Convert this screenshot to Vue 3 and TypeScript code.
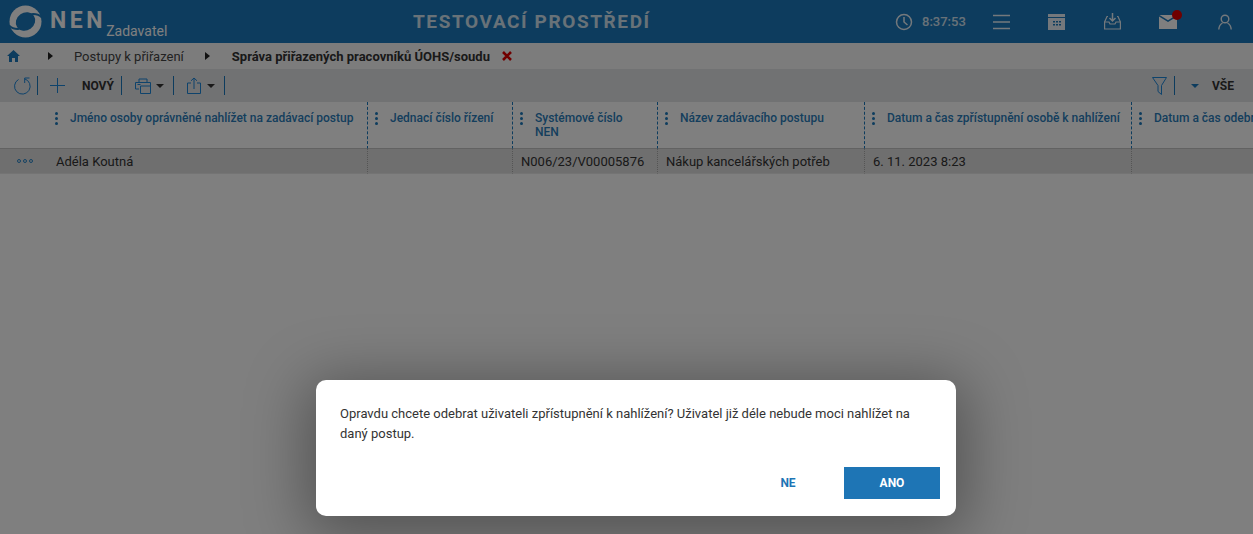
<script setup lang="ts">
interface Col { title: string; value: string; wrap?: boolean }
const cols: Col[] = [
  { title: 'Jméno osoby oprávněné nahlížet na zadávací postup', value: 'Adéla Koutná' },
  { title: 'Jednací číslo řízení', value: '' },
  { title: 'Systémové číslo NEN', value: 'N006/23/V00005876', wrap: true },
  { title: 'Název zadávacího postupu', value: 'Nákup kancelářských potřeb' },
  { title: 'Datum a čas zpřístupnění osobě k nahlížení', value: '6. 11. 2023 8:23' },
  { title: 'Datum a čas odebrání', value: '' }
]
</script>

<template>
  <div class="page">
    <header class="top">
      <div class="logo">
        <svg width="33" height="33" viewBox="0 0 34 34" class="mark">
          <circle cx="17" cy="17" r="16.500" fill="#fff" />
          <ellipse cx="17" cy="17" rx="10.500" ry="9" transform="rotate(-35 17 17)" fill="#1a78bc" />
          <path d="M23 9.500C27 9 31 10 34 13" fill="none" stroke="#1a78bc" stroke-width="2" />
          <path d="M11 24.500C7 25 3 24 0 21" fill="none" stroke="#1a78bc" stroke-width="2" />
        </svg>
        <span class="nen">NEN</span>
        <span class="role">Zadavatel</span>
      </div>
      <div class="env">TESTOVACÍ PROSTŘEDÍ</div>
      <div class="tools">
        <svg class="ic clock" width="18" height="18" viewBox="0 0 18 18" fill="none" stroke="#fff" stroke-width="1.500">
          <circle cx="9" cy="9" r="7.500" /><path d="M9 4v5l3.500 3" />
        </svg>
        <span class="time">8:37:53</span>
        <svg class="ic menu" width="17" height="16" viewBox="0 0 17 16" stroke="#fff" stroke-width="1.500">
          <path d="M0 1.500h17M0 8h17M0 14.500h17" />
        </svg>
        <svg class="ic cal" width="17" height="16" viewBox="0 0 17 16">
          <path d="M0 0h17v3H0zM0 4h17v12H0z" fill="#fff" />
          <path d="M5 7h2v1.500H5zM8 7h2v1.500H8zM11 7h2v1.500h-2zM5 10h2v1.500H5zM8 10h2v1.500H8zM11 10h2v1.500h-2z" fill="#1a78bc" />
        </svg>
        <svg class="ic inbox" width="17" height="17" viewBox="0 0 17 17" fill="none" stroke="#fff" stroke-width="1.200">
          <path d="M4 3.500H3L.6 9v7h15.800V9L14 3.500h-1" /><path d="M.6 9h4.400l1 2h5l1-2h4.400" />
          <path d="M8.500 0v8M5.500 5l3 3 3-3" stroke-width="1.500" />
        </svg>
        <span class="mail">
          <svg width="18" height="14" viewBox="0 0 18 14">
            <path d="M0 1.500 9 7l9-5.500V14H0z" fill="#fff" /><path d="M.5 0h17L9 5.200z" fill="#fff" />
          </svg>
          <i class="dot"></i>
        </span>
        <svg class="ic user" width="14" height="16" viewBox="0 0 14 16" fill="none" stroke="#fff" stroke-width="1.400">
          <circle cx="7" cy="5" r="3.800" /><path d="M.8 15.500c.2-3.500 2-5.600 3.700-6.500M13.200 15.500c-.2-3.500-2-5.600-3.700-6.500" />
        </svg>
      </div>
    </header>

    <nav class="crumbs">
      <svg class="home" width="13" height="12" viewBox="0 0 13 12"><path d="M6.500 0 13 6h-2v6H8V8H5v4H2V6H0z" fill="#1a78bc" /></svg>
      <span class="tri first"></span>
      <span class="crumb">Postupy k přiřazení</span>
      <span class="tri second"></span>
      <b class="crumb-b">Správa přiřazených pracovníků ÚOHS/soudu</b>
      <svg class="close" width="10" height="10" viewBox="0 0 10 10" stroke="#e00000" stroke-width="2.600"><path d="M1 1l8 8M9 1l-8 8" /></svg>
    </nav>

    <div class="toolbar">
      <svg class="refresh" width="17" height="18" viewBox="0 0 17 18" fill="none" stroke="#1c86d8" stroke-width="1">
        <path d="M10.500 1.800A7.800 7.800 0 1 1 4.500 2.500" /><path d="M15.500 1H10.700v5" />
      </svg>
      <span class="sep s1"></span>
      <svg class="plus" width="15" height="15" viewBox="0 0 15 15" stroke="#1c86d8" stroke-width="1"><path d="M7.500 0v15M0 7.500h15" /></svg>
      <b class="new">NOVÝ</b>
      <span class="sep s2"></span>
      <svg class="print" width="16" height="16" viewBox="0 0 16 16" fill="none" stroke="#1c86d8" stroke-width="1">
        <path d="M4 4V1h8v3M4 11H.5V4.500h15V8M5.500 8h10v7.500h-10zM2.500 6.500h3" />
      </svg>
      <span class="caret c1"></span>
      <span class="sep s3"></span>
      <svg class="share" width="14" height="17" viewBox="0 0 14 17" fill="none" stroke="#1c86d8" stroke-width="1">
        <path d="M4 6H.5v10.500h13V6H10M7 12V1M4 3.800 7 1l3 2.800" />
      </svg>
      <span class="caret c2"></span>
      <span class="sep s4"></span>
      <span class="grow"></span>
      <svg class="funnel" width="15" height="18" viewBox="0 0 15 18" fill="none" stroke="#1c86d8" stroke-width="1"><path d="M.5.500h14L9.500 8.500v9L6 14.500v-6z" /></svg>
      <span class="sep s5"></span>
      <span class="caret blue"></span>
      <b class="all">VŠE</b>
    </div>

    <div class="grid">
      <div v-for="(c, i) in cols" :key="c.title" class="th" :class="{ firstcol: i === 0, nowrap: !c.wrap }">
        <span class="dots"><i></i><i></i><i></i></span>
        <span class="tt">{{ c.title }}</span>
      </div>
      <div v-for="(c, i) in cols" :key="c.title + 'v'" class="td" :class="{ firstcol: i === 0 }">
        <span v-if="i === 0" class="rowmenu"><i></i><i></i><i></i></span>
        <span>{{ c.value }}</span>
      </div>
    </div>

    <div class="overlay"></div>
    <div class="dialog">
      <p>Opravdu chcete odebrat uživateli zpřístupnění k nahlížení? Uživatel již déle nebude moci nahlížet na daný postup.</p>
      <div class="actions">
        <button class="no">NE</button>
        <button class="yes">ANO</button>
      </div>
    </div>
  </div>
</template>

<style scoped>
.page { position: relative; width: 1253px; height: 534px; overflow: hidden; background: #fff; font-family: Roboto, "Liberation Sans", sans-serif; color: #333; }
.top { height: 43px; background: #1a78bc; display: flex; align-items: center; color: #fff; }
.logo { width: 413px; display: flex; align-items: center; padding-left: 9px; box-sizing: border-box; height: 43px; }
.mark { flex: none; margin-top: -1px; }
.nen { font-size: 23px; font-weight: 700; letter-spacing: 3.600px; margin-left: 8px; margin-top: -3px; }
.role { font-size: 14px; margin-top: 19px; }
.env { width: 237px; font-size: 19px; font-weight: 700; letter-spacing: 1.600px; white-space: nowrap; opacity: .8; }
.tools { display: flex; align-items: center; margin-left: 245px; }
.clock { flex: none; }
.time { font-size: 13px; font-weight: 500; margin-left: 9px; opacity: .8; width: 61px; }
.ic { flex: none; opacity: .9; }
.menu { margin-left: 10px; }
.cal { margin-left: 38px; }
.inbox { margin-left: 39px; }
.mail { position: relative; display: flex; margin-left: 38px; }
.dot { position: absolute; right: -5px; top: -5px; width: 10px; height: 10px; border-radius: 50%; background: #e00000; }
.user { margin-left: 41px; }
.crumbs { height: 26px; display: flex; align-items: center; background: #f9f9f9; font-size: 13px; }
.home { margin-left: 7px; }
.tri { width: 0; height: 0; border-left: 5px solid #222; border-top: 4px solid transparent; border-bottom: 4px solid transparent; }
.first { margin-left: 28px; }
.crumb { margin-left: 21px; color: #444; }
.second { margin-left: 21px; }
.crumb-b { margin-left: 22px; color: #333; font-weight: 700; font-size: 13px; }
.close { margin-left: 12px; }
.toolbar { height: 33px; background: #e2e4e7; display: flex; align-items: center; box-sizing: border-box; padding-left: 14px; padding-right: 19px; }
.sep { width: 1px; height: 19px; background: #1a78bc; flex: none; }
.s1 { margin-left: 6px; }
.plus { margin-left: 12px; }
.new { margin-left: 17px; font-size: 12px; color: #333; }
.s2 { margin-left: 7px; }
.print { margin-left: 13px; }
.caret { width: 0; height: 0; border-top: 4px solid #333; border-left: 4px solid transparent; border-right: 4px solid transparent; flex: none; }
.c1 { margin-left: 5px; }
.s3 { margin-left: 9px; }
.share { margin-left: 13px; }
.c2 { margin-left: 6px; }
.s4 { margin-left: 9px; }
.grow { flex: 1; }
.s5 { margin-left: 7px; }
.blue { border-top-color: #1a78bc; margin-left: 16px; }
.all { margin-left: 13px; font-size: 12px; color: #333; }
.grid { display: grid; grid-template-columns: 367px 145px 145px 207px 267px 400px; grid-template-rows: 47px 25px; background: #fff; }
.th { display: flex; align-items: flex-start; padding: 9px 13px 0 7px; border-left: 1px dashed #1a78bc; border-bottom: 1px solid #c4c4c4; background: #fff; box-sizing: border-box; font-size: 12px; font-weight: 500; line-height: 14px; color: #2a7dba; }
.th.firstcol { border-left: 0; padding-left: 55px; }
.th.nowrap { white-space: nowrap; }
.dots { display: flex; flex-direction: column; gap: 2px; width: 3px; margin-top: 1px; margin-right: 12px; flex: none; }
.dots i { width: 3px; height: 3px; border-radius: 50%; background: #1a78bc; }
.td { display: flex; align-items: center; padding-left: 8px; background: #dedede; border-left: 1px dotted #aaa; border-bottom: 1px solid #e8e8e8; box-sizing: border-box; font-size: 13px; color: #333; white-space: nowrap; overflow: hidden; }
.td.firstcol { border-left: 0; padding-left: 17px; }
.rowmenu { display: flex; gap: 2px; width: 39px; flex: none; }
.rowmenu i { width: 4px; height: 4px; box-sizing: border-box; border: 1px solid #2a86c8; border-radius: 50%; }
.overlay { position: absolute; inset: 0; background: rgba(0, 0, 0, .5); }
.dialog { position: absolute; left: 316px; top: 380px; width: 640px; height: 136px; box-sizing: border-box; padding: 24px 16px 16px 24px; background: #fff; border-radius: 10px; box-shadow: 0 10px 60px 10px rgba(0, 0, 0, .35); }
.dialog p { margin: 0; font-size: 13px; line-height: 20px; color: #333; width: 590px; }
.actions { display: flex; justify-content: flex-end; margin-top: 23px; }
.actions button { height: 32px; width: 96px; border: 0; font-family: inherit; font-size: 12px; font-weight: 700; background: transparent; padding: 0; }
.no { color: #1e75b5; margin-right: 8px; }
.actions .yes { background: #1e75b5; color: #fff; }
</style>

<style>
html, body { margin: 0; padding: 0; }
</style>
